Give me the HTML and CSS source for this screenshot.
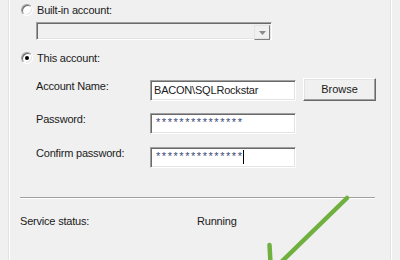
FILE: index.html
```html
<!DOCTYPE html>
<html>
<head>
<meta charset="utf-8">
<link rel="stylesheet" href="styles.css">
</head>
<body>
<div class="frame">
  <div class="radio-row r1"><span class="radio"></span><span class="lbl">Built-in account:</span></div>
  <div class="combo"><span class="combo-btn"><svg width="7" height="4" viewBox="0 0 7 4"><path d="M0 0H7L3.5 4Z" fill="#8a8a8a"/></svg></span></div>
  <div class="radio-row r2"><span class="radio checked"></span><span class="lbl">This account:</span></div>
  <div class="fields">
    <span class="lbl">Account Name:</span>
    <div class="box">BACON\SQLRockstar</div>
    <div class="btn">Browse</div>
    <span class="lbl">Password:</span>
    <div class="box pw">***************</div>
    <span></span>
    <span class="lbl row3">Confirm password:</span>
    <div class="box pw row3"><span class="caret">***************</span></div>
    <span></span>
  </div>
  <div class="sep"></div>
  <div class="status"><span class="lbl slabel">Service status:</span><span class="lbl">Running</span></div>
</div>
<svg class="arrow" width="400" height="260" viewBox="0 0 400 260">
  <path d="M347 198L271 272M269.5 245L271 272" stroke="#6fb03f" stroke-width="4.5" stroke-linecap="round" fill="none"/>
</svg>
</body>
</html>
```
FILE: styles.css
```css
* { box-sizing: border-box; }
html, body { margin: 0; padding: 0; }
body {
  width: 400px;
  height: 260px;
  overflow: hidden;
  background: #f0f0f0;
  font-family: "Liberation Sans", Arial, sans-serif;
  font-size: 11px;
  line-height: 13px;
  color: #1a1a1a;
  position: relative;
}
.lbl { letter-spacing: -0.2px; }
.frame {
  margin-left: 9px;
  width: 383px;
  height: 260px;
  border-left: 1px solid #fff;
  border-right: 1px solid #fff;
  box-shadow: -1px 0 #e2e2e2, inset -1px 0 #e2e2e2;
  padding: 4px 0 0 11px;
}
.radio-row {
  display: flex;
  align-items: center;
  gap: 4px;
  height: 12px;
}
.radio {
  width: 12px;
  height: 12px;
  border-radius: 50%;
  background: #fff;
  border: 1px solid;
  border-color: #a0a0a0 #fff #fff #a0a0a0;
  box-shadow: inset 1px 1px #696969, inset -1px -1px #e3e3e3;
  display: flex;
  align-items: center;
  justify-content: center;
}
.radio.checked::after {
  content: "";
  width: 4px;
  height: 4px;
  border-radius: 50%;
  background: #000;
}
.combo {
  margin: 6px 0 0 15px;
  width: 236px;
  height: 18px;
  border: 1px solid;
  border-color: #a0a0a0 #fff #fff #a0a0a0;
  box-shadow: inset 1px 1px #696969, inset -1px -1px #e3e3e3;
  background: #f0f0f0;
  display: flex;
  justify-content: flex-end;
  padding: 1px;
}
.combo-btn {
  width: 16px;
  height: 15px;
  border: 1px solid;
  border-color: #e3e3e3 #808080 #808080 #e3e3e3;
  display: flex;
  align-items: center;
  justify-content: center;
  margin-top: 1px;
}
.r2 { margin-top: 12px; }
.fields {
  display: grid;
  grid-template-columns: 107px 146px 73px;
  column-gap: 7px;
  row-gap: 12px;
  margin: 16px 0 0 15px;
  align-items: start;
}
.row3 { margin-top: 1px; }
.box {
  height: 21px;
  background: #fff;
  border: 1px solid;
  border-color: #a0a0a0 #fff #fff #a0a0a0;
  box-shadow: inset 1px 1px #696969, inset -1px -1px #e3e3e3;
  padding: 3px 0 0 3px;
  white-space: nowrap;
  overflow: hidden;
  letter-spacing: -0.2px;
}
.box.pw {
  color: #3b4a78;
  letter-spacing: 1.55px;
  padding: 2px 0 0 5px;
}
.caret {
  border-right: 1px solid #000;
  padding-bottom: 2px;
}
.btn {
  height: 23px;
  margin-top: -2px;
  border: 1px solid;
  border-color: #fff #696969 #696969 #fff;
  box-shadow: inset -1px -1px #a0a0a0, inset 1px 1px #e3e3e3;
  background: #f0f0f0;
  display: flex;
  align-items: center;
  justify-content: center;
}
.sep {
  margin: 29px 0 0 -1px;
  width: 355px;
  border-top: 1px solid #a0a0a0;
  border-bottom: 1px solid #fff;
}
.status {
  display: flex;
  margin: 16px 0 0 -1px;
}
.slabel { width: 177px; }
.arrow {
  position: absolute;
  left: 0;
  top: 0;
}
```
